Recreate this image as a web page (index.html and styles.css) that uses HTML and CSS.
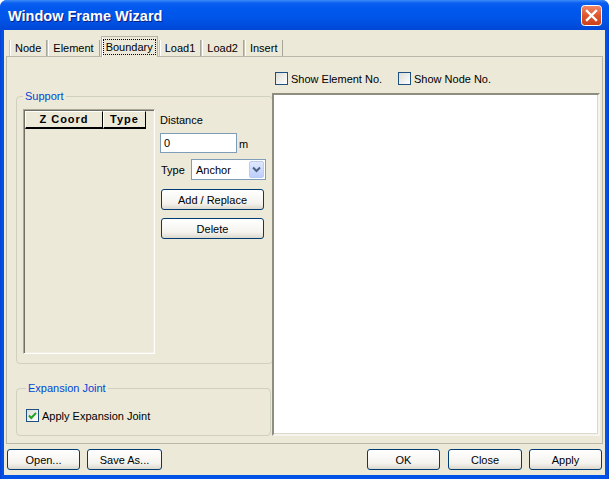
FILE: index.html
```html
<!DOCTYPE html>
<html lang="en">
<head>
  <meta charset="UTF-8" />
  <title>Window Frame Wizard</title>
  <link rel="stylesheet" href="styles.css">
</head>
<body>
  <div class="window">
    <div class="titlebar">
      <span class="title">Window Frame Wizard</span>
      <span class="close-btn">
        <svg width="21" height="21" viewBox="0 0 21 21">
          <defs>
            <linearGradient id="cg" x1="0" y1="0" x2="0" y2="1">
              <stop offset="0" stop-color="#f08a6c"/>
              <stop offset="0.5" stop-color="#e0552d"/>
              <stop offset="1" stop-color="#c8401c"/>
            </linearGradient>
          </defs>
          <rect x="0.5" y="0.5" width="20" height="20" rx="3" fill="url(#cg)" stroke="#fff"/>
          <path d="M6 6 L15 15 M15 6 L6 15" stroke="#fff" stroke-width="2.4" stroke-linecap="square"/>
        </svg>
      </span>
    </div>

    <div class="client">
      <div class="tabs">
        <span class="tab">Node</span>
        <span class="tab">Element</span>
        <span class="tab active"><span class="focus">Boundary</span></span>
        <span class="tab">Load1</span>
        <span class="tab">Load2</span>
        <span class="tab">Insert</span>
      </div>

      <div class="panel">
        <div class="left-col">
          <fieldset class="group support">
            <legend>Support</legend>
            <div class="support-body">
              <div class="listbox">
                <div class="list-head">
                  <span class="col col-z">Z Coord</span>
                  <span class="col col-type">Type</span>
                </div>
              </div>
              <div class="controls">
                <div class="lbl">Distance</div>
                <div class="row">
                  <span class="textbox">0</span>
                  <span class="unit">m</span>
                </div>
                <div class="row type-row">
                  <span class="lbl-type">Type</span>
                  <span class="combo">
                    <span class="combo-text">Anchor</span>
                    <span class="combo-btn">
                      <svg width="9" height="7" viewBox="0 0 9 7">
                        <path d="M1 1.5 L4.5 5 L8 1.5" fill="none" stroke="#4d6185" stroke-width="2"/>
                      </svg>
                    </span>
                  </span>
                </div>
                <button class="btn side-btn">Add / Replace</button>
                <button class="btn side-btn delete">Delete</button>
              </div>
            </div>
          </fieldset>

          <fieldset class="group expansion">
            <legend>Expansion Joint</legend>
            <label class="check">
              <span class="box">
                <svg width="11" height="11" viewBox="0 0 11 11">
                  <path d="M2 5.5 L4.3 8 L9 2.8" fill="none" stroke="#21a121" stroke-width="2"/>
                </svg>
              </span>
              Apply Expansion Joint
            </label>
          </fieldset>
        </div>

        <div class="right-col">
          <div class="show-row">
            <label class="check show-elem"><span class="box"></span>Show Element No.</label>
            <label class="check"><span class="box"></span>Show Node No.</label>
          </div>
          <div class="canvas"></div>
        </div>
      </div>

      <div class="footer">
        <div class="btn-group">
          <button class="btn w-open">Open...</button>
          <button class="btn w-save">Save As...</button>
        </div>
        <div class="btn-group">
          <button class="btn w-ok">OK</button>
          <button class="btn w-close">Close</button>
          <button class="btn w-apply">Apply</button>
        </div>
      </div>
    </div>
  </div>
</body>
</html>
```

FILE: styles.css
```css
body {
  margin: 0;
  background: #fff;
  font-family: 'Liberation Sans', Arial, sans-serif;
  font-size: 11px;
  color: #000;
}

.window {
  width: 609px;
  height: 479px;
  display: flex;
  flex-direction: column;
  background: linear-gradient(90deg, #0a3fcf, #0052e6 2px, #0052e6 calc(100% - 2px), #0a3fcf);
  border-radius: 7px 7px 0 0;
  overflow: hidden;
}

.titlebar {
  height: 30px;
  flex: none;
  display: flex;
  align-items: center;
  justify-content: space-between;
  padding: 0 7px 0 8px;
  background: linear-gradient(#3d8cf6 0, #0a5ff0 3px, #0058ee 8px, #0055e8 60%, #0048d6 100%);
}

.title {
  color: #fff;
  font-weight: bold;
  font-size: 14.5px;
  text-shadow: 1px 1px #0a1f86;
  margin-top: 1px;
}

.close-btn {
  display: flex;
  margin-top: 1px;
}

.client {
  flex: 1;
  display: flex;
  flex-direction: column;
  margin: 0 4px 4px 4px;
  padding: 7px 2px 0 2px;
  background: #ece9d8;
}

/* tabs */
.tabs {
  height: 19px;
  display: flex;
  align-items: flex-end;
  padding-left: 3px;
}

.tab {
  height: 16px;
  line-height: 16px;
  padding: 0 5px;
  border-left: 1px solid #c9c6b6;
  border-right: 1px solid #a7a69a;
  box-shadow: inset 1px 0 #fff;
}

.tab.active {
  height: 20px;
  line-height: 20px;
  margin: 0 1px -1px;
  padding: 0 1px;
  border: 1px solid #b5b3a5;
  border-bottom: none;
  background: #ece9d8;
  position: relative;
  z-index: 1;
}

.focus {
  display: inline-block;
  line-height: 14px;
  padding: 0 2px;
  border: 1px dotted #000;
}

.panel {
  flex: 1;
  display: flex;
  gap: 1px;
  border: 1px solid #b9b7aa;
  padding: 15px 2px 7px 9px;
}

/* left column */
.left-col {
  width: 255px;
  margin-top: 17px;
  display: flex;
  flex-direction: column;
}

.group {
  margin: 0;
  border: 1px solid #d0d0bf;
  border-radius: 4px;
  padding: 6px 6px 9px 6px;
}

.group legend {
  color: #0046d5;
  line-height: 14px;
  padding: 0 2px;
}

.support-body {
  display: flex;
  gap: 5px;
}

.listbox {
  width: 132px;
  height: 245px;
  box-sizing: border-box;
  border: 1px solid;
  border-color: #aca899 #fff #fff #aca899;
  box-shadow: inset 1px 1px #716f64, inset -1px -1px #f1efe2;
  padding: 1px;
}

.list-head {
  display: flex;
}

.col {
  height: 18px;
  box-sizing: border-box;
  line-height: 15px;
  text-align: center;
  font-weight: bold;
  letter-spacing: 1px;
  border-top: 1px solid #fff;
  border-left: 1px solid #fff;
  border-right: 1px solid #000;
  border-bottom: 2px solid #000;
}

.col-z { width: 78px; }
.col-type { width: 43px; }

.controls {
  display: flex;
  flex-direction: column;
  align-items: flex-start;
}

.lbl {
  margin-top: 4px;
  line-height: 14px;
}

.row {
  display: flex;
  align-items: center;
  margin-top: 6px;
}

.textbox {
  width: 77px;
  height: 20px;
  box-sizing: border-box;
  border: 1px solid #7f9db9;
  background: #fff;
  padding-left: 3px;
  line-height: 18px;
}

.unit {
  margin-left: 2px;
  margin-top: 2px;
}

.type-row {
  margin-left: 1px;
}

.lbl-type {
  width: 30px;
}

.combo {
  width: 75px;
  height: 21px;
  box-sizing: border-box;
  border: 1px solid #7f9db9;
  background: #fff;
  display: flex;
  align-items: center;
  justify-content: space-between;
  padding: 1px;
}

.combo-text {
  padding-left: 3px;
}

.combo-btn {
  width: 15px;
  height: 17px;
  box-sizing: border-box;
  border: 1px solid #b9ccf4;
  border-radius: 2px;
  background: linear-gradient(#dfe8fe, #bccffb);
  display: flex;
  align-items: center;
  justify-content: center;
}

.btn {
  height: 21px;
  box-sizing: border-box;
  border: 1px solid #003c74;
  border-radius: 3px;
  background: linear-gradient(#fff, #f4f3ee 70%, #dcd8cc);
  font-family: 'Liberation Sans', Arial, sans-serif;
  font-size: 11px;
  color: #000;
  padding: 0;
}

.side-btn {
  width: 103px;
  margin-left: 1px;
  margin-top: 9px;
}

.side-btn.delete {
  margin-top: 8px;
}

.expansion {
  margin-top: 17px;
  padding: 14px 9px 13px 9px;
}

.check {
  display: flex;
  align-items: center;
  height: 13px;
}

.box {
  width: 13px;
  height: 13px;
  box-sizing: border-box;
  border: 1px solid #1c5180;
  background: linear-gradient(135deg, #dcdcd7, #fff);
  margin-right: 3px;
  display: flex;
  align-items: center;
  justify-content: center;
}

/* right column */
.right-col {
  flex: 1;
  display: flex;
  flex-direction: column;
}

.show-row {
  display: flex;
  padding-left: 3px;
  height: 13px;
  margin-bottom: 8px;
}

.show-elem {
  width: 123px;
}

.canvas {
  flex: 1;
  background: #fff;
  border: 2px solid;
  border-color: #8f8d80 #f5f4ee #f5f4ee #8f8d80;
  box-shadow: inset -1px -1px #dcd9cb;
}

/* footer */
.footer {
  display: flex;
  justify-content: space-between;
  padding: 5px 1px;
}

.btn-group {
  display: flex;
  gap: 7px;
}

.w-open { width: 73px; }
.w-save { width: 75px; }
.w-ok { width: 73px; margin-right: 1px; }
.w-close { width: 74px; }
.w-apply { width: 73px; }
```
